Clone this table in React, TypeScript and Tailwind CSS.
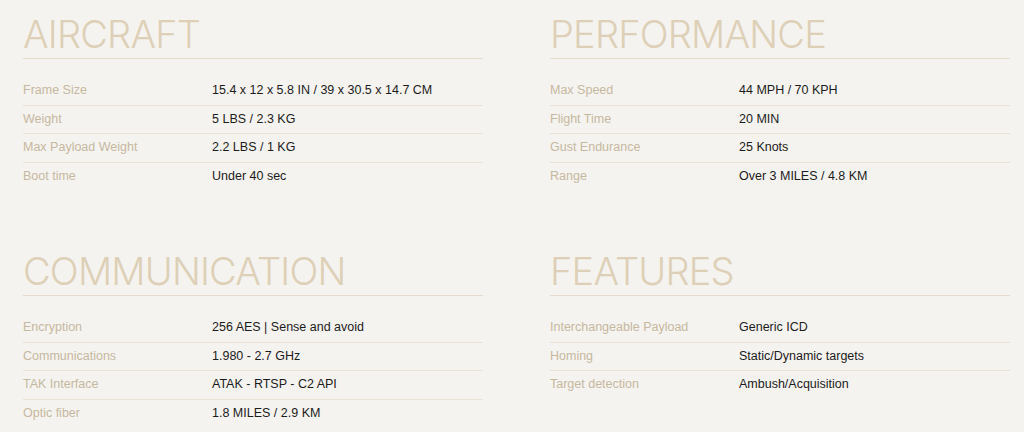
const sections = [
  {
    title: "AIRCRAFT",
    rows: [
      ["Frame Size", "15.4 x 12 x 5.8 IN / 39 x 30.5 x 14.7 CM"],
      ["Weight", "5 LBS / 2.3 KG"],
      ["Max Payload Weight", "2.2 LBS / 1 KG"],
      ["Boot time", "Under 40 sec"],
    ],
  },
  {
    title: "PERFORMANCE",
    rows: [
      ["Max Speed", "44 MPH / 70 KPH"],
      ["Flight Time", "20 MIN"],
      ["Gust Endurance", "25 Knots"],
      ["Range", "Over 3 MILES / 4.8 KM"],
    ],
  },
  {
    title: "COMMUNICATION",
    rows: [
      ["Encryption", "256 AES | Sense and avoid"],
      ["Communications", "1.980 - 2.7 GHz"],
      ["TAK Interface", "ATAK - RTSP - C2 API"],
      ["Optic fiber", "1.8 MILES / 2.9 KM"],
    ],
  },
  {
    title: "FEATURES",
    rows: [
      ["Interchangeable Payload", "Generic ICD"],
      ["Homing", "Static/Dynamic targets"],
      ["Target detection", "Ambush/Acquisition"],
    ],
  },
];

const SpecSection = ({ title, rows }: { title: string; rows: string[][] }) => {
  return (
    <div className="w-[460px]">
      {/* Heading */}
      <h2 className="font-['Inter',sans-serif] text-[38px] leading-[38px] font-light text-[#ddd0b7] pb-[5px] border-b border-[#e6dccb] tracking-[-0.8px]">
        {title}
      </h2>

      {/* Spec rows */}
      <div className="mt-[18px] font-['Liberation_Sans',Arial,sans-serif]">
        {rows.map(([label, value], i) => (
          <div
            key={label}
            className={`flex py-[5px] text-[12.5px] leading-[17.5px] ${
              i < rows.length - 1 ? "border-b border-[#e9e2d5]" : ""
            }`}
          >
            <span className="w-[189px] shrink-0 text-[#c6b89f]">{label}</span>
            <span className="text-[#1c1c1c]">{value}</span>
          </div>
        ))}
      </div>
    </div>
  );
};

export default function App() {
  return (
    <div className="w-[1024px] h-[432px] overflow-hidden bg-[#f5f3ef] pl-[23px] pt-[15px]">
      <div className="grid grid-cols-[460px_460px] gap-x-[67px] gap-y-[62px]">
        {sections.map((s) => (
          <SpecSection key={s.title} title={s.title} rows={s.rows} />
        ))}
      </div>
    </div>
  );
}
